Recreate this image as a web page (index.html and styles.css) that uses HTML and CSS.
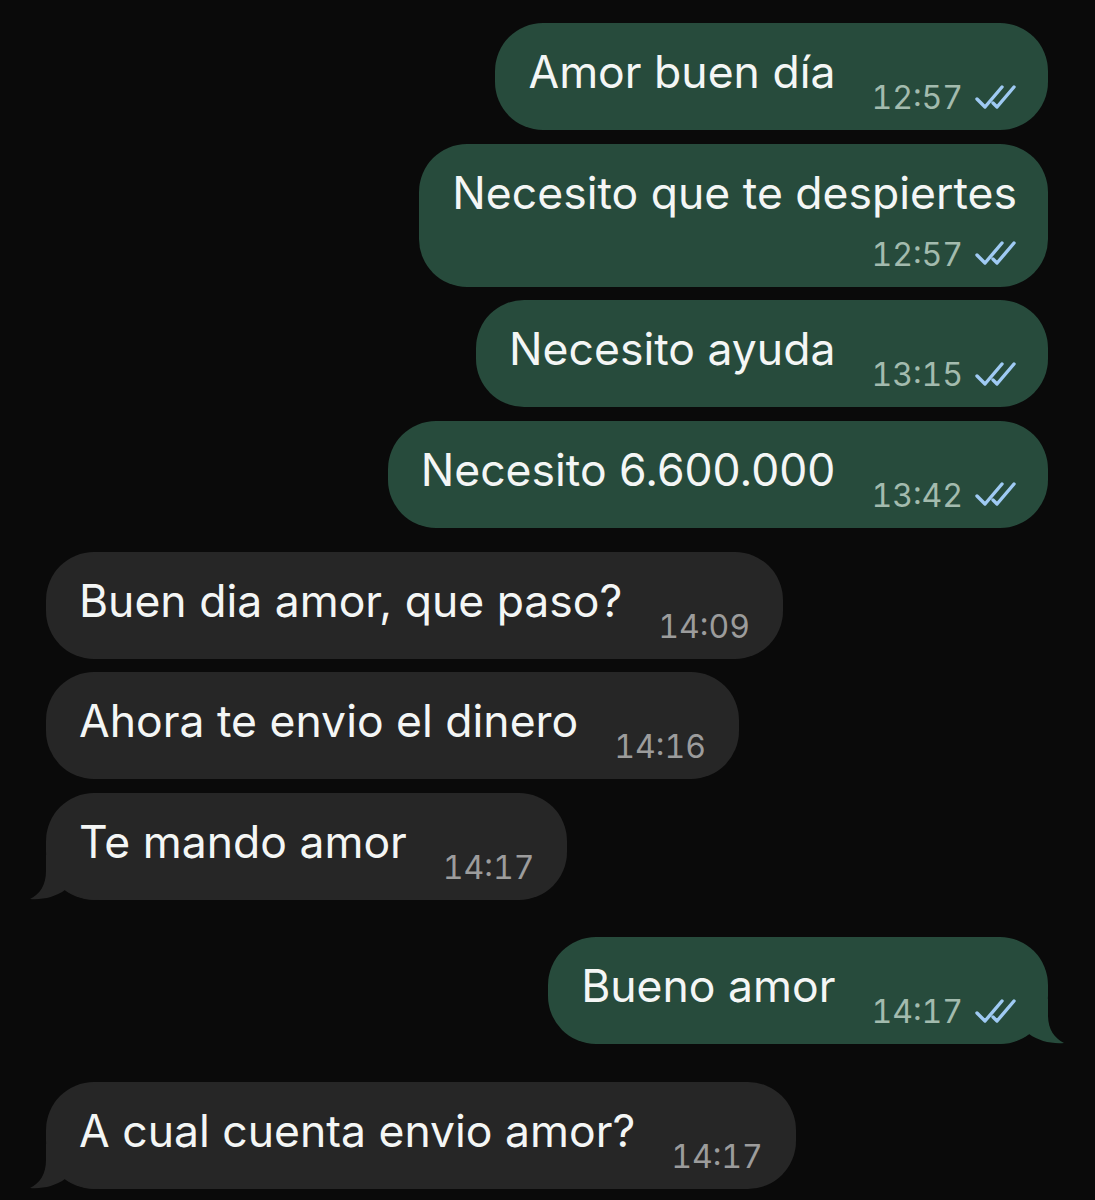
FILE: index.html
```html
<!DOCTYPE html>
<html lang="es">
<head>
    <meta charset="UTF-8">
    <meta name="viewport" content="width=device-width, initial-scale=1.0">
    <title>Chat</title>
    <link rel="stylesheet" href="styles.css">
</head>
<body>

    <div class="chat">

        <div class="msg out">
            <span class="text">Amor buen día</span>
            <span class="meta"><span class="time">12:57</span><svg class="ticks" viewBox="0 0 42 24"><path d="M2 14 L10 22 L27 2"/><path d="M18 18 L22 22 L39 2"/></svg></span>
        </div>

        <div class="msg out stacked">
            <span class="text">Necesito que te despiertes</span>
            <span class="meta"><span class="time">12:57</span><svg class="ticks" viewBox="0 0 42 24"><path d="M2 14 L10 22 L27 2"/><path d="M18 18 L22 22 L39 2"/></svg></span>
        </div>

        <div class="msg out">
            <span class="text">Necesito ayuda</span>
            <span class="meta"><span class="time">13:15</span><svg class="ticks" viewBox="0 0 42 24"><path d="M2 14 L10 22 L27 2"/><path d="M18 18 L22 22 L39 2"/></svg></span>
        </div>

        <div class="msg out">
            <span class="text">Necesito 6.600.000</span>
            <span class="meta"><span class="time">13:42</span><svg class="ticks" viewBox="0 0 42 24"><path d="M2 14 L10 22 L27 2"/><path d="M18 18 L22 22 L39 2"/></svg></span>
        </div>

        <div class="msg in first">
            <span class="text">Buen dia amor, que paso?</span>
            <span class="meta"><span class="time">14:09</span></span>
        </div>

        <div class="msg in">
            <span class="text">Ahora te envio el dinero</span>
            <span class="meta"><span class="time">14:16</span></span>
        </div>

        <div class="msg in tail">
            <svg class="tail-shape" viewBox="0 0 70 45"><path d="M16 0 L16 16 C16 30 10 39 0 44 C13 45 25 42 35 35 C44 41 55 45 70 45 L70 0 Z"/></svg>
            <span class="text">Te mando amor</span>
            <span class="meta"><span class="time">14:17</span></span>
        </div>

        <div class="msg out tail far">
            <svg class="tail-shape" viewBox="0 0 70 45"><path d="M16 0 L16 16 C16 30 10 39 0 44 C13 45 25 42 35 35 C44 41 55 45 70 45 L70 0 Z"/></svg>
            <span class="text">Bueno amor</span>
            <span class="meta"><span class="time">14:17</span><svg class="ticks" viewBox="0 0 42 24"><path d="M2 14 L10 22 L27 2"/><path d="M18 18 L22 22 L39 2"/></svg></span>
        </div>

        <div class="msg in tail far">
            <svg class="tail-shape" viewBox="0 0 70 45"><path d="M16 0 L16 16 C16 30 10 39 0 44 C13 45 25 42 35 35 C44 41 55 45 70 45 L70 0 Z"/></svg>
            <span class="text">A cual cuenta envio amor?</span>
            <span class="meta"><span class="time">14:17</span></span>
        </div>

    </div>

</body>
</html>
```

FILE: styles.css
```css
body {
    margin: 0;
    background: #0a0a0a;
    font-family: 'Inter', 'Roboto', sans-serif;
}

.chat {
    display: flex;
    flex-direction: column;
    padding: 23px 47px 0 46px;
}

/* Bubbles */
.msg {
    position: relative;
    display: flex;
    align-items: flex-start;
    border-radius: 48px;
    margin-top: 13.5px;
}
.msg:first-child {
    margin-top: 0;
}
.msg.first {
    margin-top: 24px;
}
.msg.far {
    margin-top: 37.5px;
}
.out {
    align-self: flex-end;
    background: #274b3c;
    padding: 0 31px 0 33px;
}
.in {
    align-self: flex-start;
    background: #262626;
    padding: 0 33px 0 33px;
}

.text {
    position: relative;
    color: #f4f6f5;
    font-size: 44.5px;
    line-height: 54px;
    padding: 22px 0 31px;
    white-space: nowrap;
}

.meta {
    position: relative;
    display: flex;
    align-items: center;
    margin-top: 59px;
    margin-left: 36px;
    height: 31px;
}
.time {
    font-size: 32px;
    line-height: 31px;
    font-variant-numeric: tabular-nums;
}
.out .time {
    color: #a3bbae;
}
.in .time {
    color: #9c9c9c;
}
.ticks {
    width: 42px;
    height: 24px;
    margin-left: 12px;
    margin-top: -2px;
    fill: none;
    stroke: #9fcaf3;
    stroke-width: 3.4;
    stroke-linecap: round;
    stroke-linejoin: round;
}

/* Long text: time drops to its own line */
.stacked {
    flex-direction: column;
}
.stacked .text {
    padding-bottom: 0;
}
.stacked .meta {
    align-self: flex-end;
    margin-top: 19px;
    margin-bottom: 17px;
}

/* Bubble tails */
.tail-shape {
    position: absolute;
    bottom: 0;
    width: 70px;
    height: 45px;
}
.in .tail-shape {
    left: -16px;
    fill: #262626;
}
.out .tail-shape {
    right: -16px;
    fill: #274b3c;
    transform: scaleX(-1);
}
```
